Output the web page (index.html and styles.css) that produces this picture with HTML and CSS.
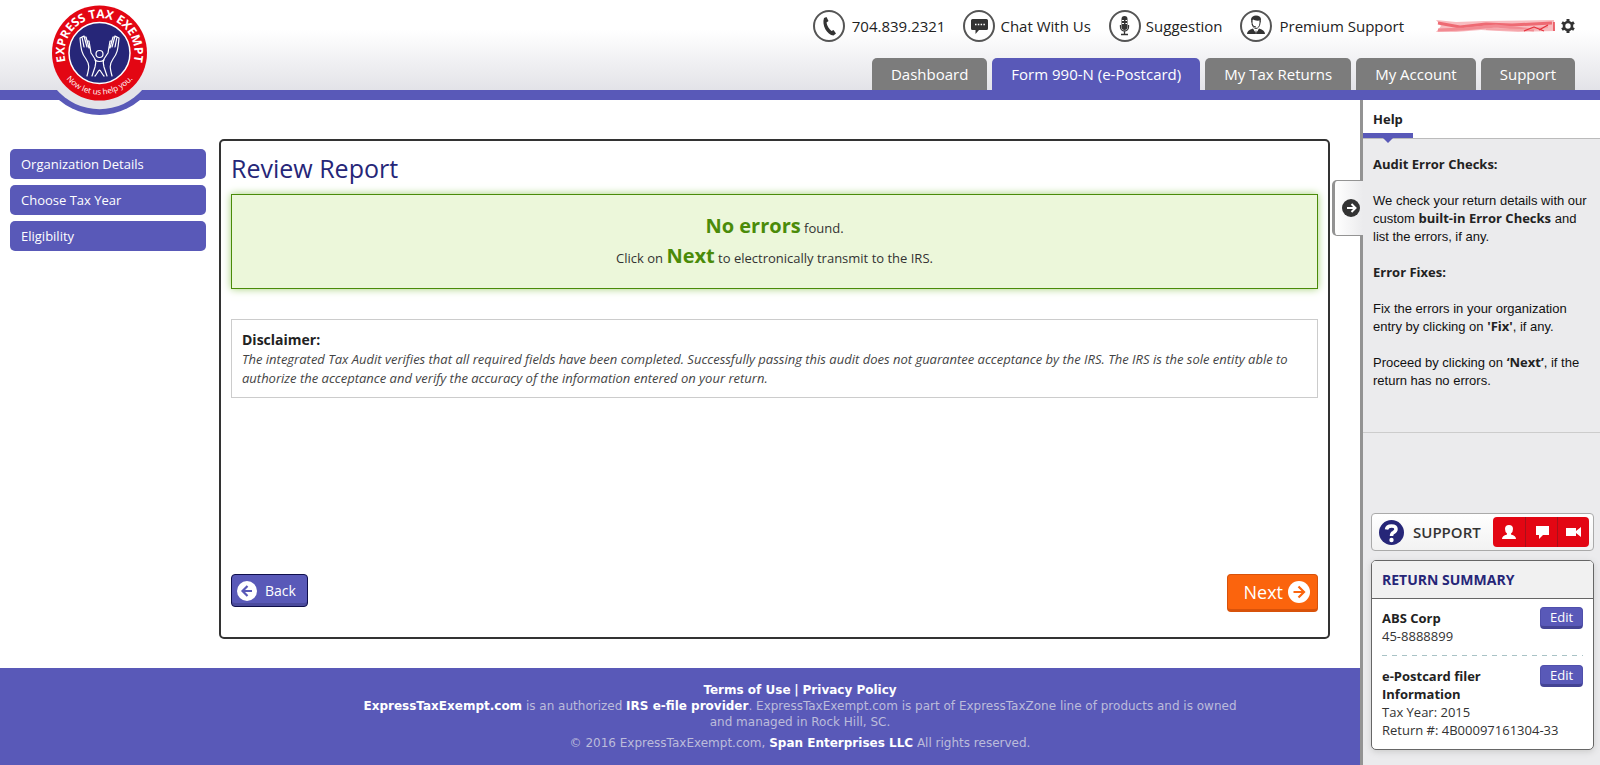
FILE: index.html
```html
<!DOCTYPE html>
<html lang="en">
<head>
    <meta charset="UTF-8">
    <meta name="viewport" content="width=device-width, initial-scale=1.0">
    <title>Review Report - ExpressTaxExempt</title>
    <link rel="stylesheet" href="styles.css">
</head>
<body>
    <header class="header">
        <a href="#" class="logo" aria-label="Express Tax Exempt">
            <svg width="130" height="116" viewBox="0 0 130 116">
                <defs>
                    <path id="arcTop" d="M37.3 75 A35 35 0 1 1 91.7 75"/>
                    <path id="arcBottom" d="M24 66 A43 43 0 0 0 105 66"/>
                </defs>
                <path d="M14.8 90 A62 62 0 0 0 114.2 90 Z" fill="#5959b8"/>
                <path d="M21 89 A57 57 0 0 0 108 89 Z" fill="#e3e3e8"/>
                <circle cx="64.5" cy="53" r="47.5" fill="#e30613"/>
                <circle cx="64.5" cy="53" r="30.5" fill="#262678" stroke="#fff" stroke-width="1.5"/>
                <text class="logo-name"><textPath href="#arcTop" startOffset="50%" text-anchor="middle">EXPRESS TAX EXEMPT</textPath></text>
                <text class="logo-tag"><textPath href="#arcBottom" startOffset="50%" text-anchor="middle">Now let us help you.</textPath></text>
                <g fill="none" stroke="#fff" stroke-width="1.2" stroke-linecap="round" stroke-linejoin="round">
                    <circle cx="64.5" cy="54" r="3.5"/>
                    <path d="M52 76 C54 68 55 65 51 59 C47 54 46 50 45 38 L47 37 L49 47 M47 37 L49 36 L52 47 M49 37 L51 37 L54 48 M52 41 L54 41 L56 53 C60 59 62 60 60 67 L57 76"/>
                    <path d="M77 76 C75 68 74 65 78 59 C82 54 83 50 84 38 L82 37 L80 47 M82 37 L80 36 L77 47 M80 37 L78 37 L75 48 M77 41 L75 41 L73 53 C69 59 67 60 69 67 L72 76"/>
                    <path d="M60 60 C62 62 67 62 69 60 M60 76 C62 74 63 71 64.5 70 C66 71 67 74 69 76"/>
                </g>
            </svg>
        </a>
        <div class="top-links">
            <a href="#">
                <svg class="round-icon" width="32" height="32" viewBox="0 0 32 32">
                    <circle cx="16" cy="16" r="15"/>
                    <path d="M11 8 L13.5 7 L15.5 11 L13.5 12.5 C14 16 16 19 18.5 21 L20.5 20 L23 23.5 L20.5 25.5 C14 25 8.5 15 11 8 Z"/>
                </svg>
                704.839.2321
            </a>
            <a href="#">
                <svg class="round-icon" width="32" height="32" viewBox="0 0 32 32">
                    <circle cx="16" cy="16" r="15"/>
                    <path d="M9.5 9 H23.5 Q25 9 25 10.5 V18.5 Q25 20 23.5 20 H16 L12.5 24 V20 H9.5 Q8 20 8 18.5 V10.5 Q8 9 9.5 9 Z"/>
                    <path d="M12 14.5 H22" stroke="#fff" stroke-width="1.5" stroke-dasharray="1.5 1.3"/>
                </svg>
                Chat With Us
            </a>
            <a href="#">
                <svg class="round-icon" width="32" height="32" viewBox="0 0 32 32">
                    <circle cx="16" cy="16" r="15"/>
                    <rect x="12.5" y="6" width="6" height="14" rx="3"/>
                    <path d="M13 10.5 H15 M16.5 10.5 H18 M13 13.5 H15 M16.5 13.5 H18" stroke="#fff"/>
                    <path d="M11.5 15 V17 A4 4 0 0 0 19.5 17 V15 M15.5 21 V24 M12 24.5 H19" fill="none" stroke="#333" stroke-width="1.3"/>
                </svg>
                Suggestion
            </a>
            <a href="#">
                <svg class="round-icon" width="32" height="32" viewBox="0 0 32 32">
                    <circle cx="16" cy="16" r="15"/>
                    <path d="M7 24 Q7 20 13 18.5 L16 23 L19 18.5 Q25 20 25 24 Z"/>
                    <path d="M12 11 V13 Q12.5 18 16 18.5 Q19.5 18 20 13 V11" fill="#fff" stroke="#333"/>
                    <path d="M11.5 13 L11 9 Q12 5.5 16 5.5 Q20.5 5.5 21 9 L20.5 13 L19.5 10.5 Q15 11 13 9.5 Z"/>
                    <path d="M12 14 Q13 17 16 17" fill="none" stroke="#333"/>
                    <path d="M13.5 18.5 L16 21 L18.5 18.5 L16 24 Z" fill="#fff"/>
                    <path d="M16 20 L17 23.5 H15 Z"/>
                </svg>
                Premium Support
            </a>
            <a href="#" class="account" aria-label="Account settings">
                <svg width="120" height="14" viewBox="0 0 120 14">
                    <path d="M0 1 L20 3 L48 2 L118 1 L119 12 L82 13 L45 11 L20 13 L0 13 L5 7 Z" fill="#f8bcc0"/>
                    <g fill="none" stroke-linejoin="round">
                        <path d="M2 4 L24 8 L50 5 L76 6 L116 4" stroke="#ee6a73" stroke-width="3"/>
                        <path d="M2 11 L28 10 L60 7 L98 11" stroke="#f28a92" stroke-width="3"/>
                        <path d="M50 10 L86 11 L112 8" stroke="#f5a3a8" stroke-width="2"/>
                        <path d="M88 12 L98 8 L108 12 M103 11 L112 6 M118 3 V12" stroke="#e5303c" stroke-width="1.3"/>
                    </g>
                </svg>
                <svg width="14" height="14" viewBox="0 0 14 14">
                    <circle cx="7" cy="7" r="4" fill="none" stroke="#333" stroke-width="2.6"/>
                    <path d="M7 0 V3 M7 11 V14 M1 3.5 L3.5 5 M10.5 9 L13 10.5 M1 10.5 L3.5 9 M10.5 5 L13 3.5" stroke="#333" stroke-width="3"/>
                </svg>
            </a>
        </div>
        <nav class="tabs">
            <a href="#">Dashboard</a>
            <a href="#" class="active">Form 990-N (e-Postcard)</a>
            <a href="#">My Tax Returns</a>
            <a href="#">My Account</a>
            <a href="#">Support</a>
        </nav>
    </header>

    <div class="page">
        <div class="content">
            <div class="columns">
                <nav class="side-menu">
                    <a href="#">Organization Details</a>
                    <a href="#">Choose Tax Year</a>
                    <a href="#">Eligibility</a>
                </nav>
                <main class="report">
                    <h1>Review Report</h1>
                    <div class="success">
                        <p><strong>No errors</strong> found.</p>
                        <p>Click on <strong>Next</strong> to electronically transmit to the IRS.</p>
                    </div>
                    <div class="disclaimer">
                        <h2>Disclaimer:</h2>
                        <p>The integrated Tax Audit verifies that all required fields have been completed. Successfully passing this audit does not guarantee acceptance by the IRS. The IRS is the sole entity able to authorize the acceptance and verify the accuracy of the information entered on your return.</p>
                    </div>
                    <div class="actions">
                        <button type="button" class="back">
                            <svg width="20" height="20" viewBox="0 0 20 20">
                                <circle cx="10" cy="10" r="10" fill="#fff"/>
                                <path d="M15 10 H6 M10.5 5 L5.5 10 L10.5 15" fill="none" stroke="#5959b8" stroke-width="2.2"/>
                            </svg>
                            Back
                        </button>
                        <button type="button" class="next">
                            Next
                            <svg width="22" height="22" viewBox="0 0 22 22">
                                <circle cx="11" cy="11" r="11" fill="#fff"/>
                                <path d="M5.5 11 H16 M10.5 5.5 L16 11 L10.5 16.5" fill="none" stroke="#fb640d" stroke-width="2.2"/>
                            </svg>
                        </button>
                    </div>
                </main>
            </div>
            <footer class="footer">
                <p><a href="#">Terms of Use</a> <b>|</b> <a href="#">Privacy Policy</a></p>
                <p><a href="#">ExpressTaxExempt.com</a> is an authorized <b>IRS e-file provider</b>. ExpressTaxExempt.com is part of ExpressTaxZone line of products and is owned and managed in Rock Hill, SC.</p>
                <p class="copyright">© 2016 ExpressTaxExempt.com, <b>Span Enterprises LLC</b> All rights reserved.</p>
            </footer>
        </div>

        <aside class="panel">
            <button type="button" class="collapse" aria-label="Collapse help">
                <svg width="18" height="18" viewBox="0 0 18 18">
                    <circle cx="9" cy="9" r="9" fill="#333"/>
                    <path d="M5 9 H13 M9.5 5 L13.5 9 L9.5 13" fill="none" stroke="#fff" stroke-width="2"/>
                </svg>
            </button>
            <div class="panel-head"><h2>Help</h2></div>
            <div class="help">
                <p><b>Audit Error Checks:</b></p>
                <p>We check your return details with our custom <b>built-in Error Checks</b> and list the errors, if any.</p>
                <p><b>Error Fixes:</b></p>
                <p>Fix the errors in your organization entry by clicking on <b>'Fix'</b>, if any.</p>
                <p>Proceed by clicking on <b>‘Next’</b>, if the return has no errors.</p>
            </div>
            <div class="support">
                <svg width="25" height="25" viewBox="0 0 25 25">
                    <circle cx="12.5" cy="12.5" r="12.5" fill="#262678"/>
                    <path d="M7.5 9.5 Q8 6 12.5 6 Q17 6 17 9 Q17 11 14.5 12.5 Q12.5 13.5 12.5 16" fill="none" stroke="#fff" stroke-width="3.5"/>
                    <circle cx="12.5" cy="20" r="2.2" fill="#fff"/>
                </svg>
                <span>SUPPORT</span>
                <div class="support-buttons">
                    <button type="button" aria-label="Contact">
                        <svg width="16" height="16" viewBox="0 0 16 16"><path d="M8 1 Q12 1 12 5 Q12 8 10 9.5 L10 10.5 Q15 11.5 15 15 H1 Q1 11.5 6 10.5 V9.5 Q4 8 4 5 Q4 1 8 1 Z"/></svg>
                    </button>
                    <button type="button" aria-label="Chat">
                        <svg width="16" height="16" viewBox="0 0 16 16"><path d="M2 2 H15 V11 H9 L5 15 V11 H2 Z"/></svg>
                    </button>
                    <button type="button" aria-label="Video">
                        <svg width="16" height="16" viewBox="0 0 16 16"><path d="M0 4 H10 V7 L15 3 V13 L10 9 V12 H0 Z"/></svg>
                    </button>
                </div>
            </div>
            <section class="summary">
                <h2>RETURN SUMMARY</h2>
                <div class="summary-row">
                    <button type="button">Edit</button>
                    <h3>ABS Corp</h3>
                    <p>45-8888899</p>
                </div>
                <div class="summary-row">
                    <button type="button">Edit</button>
                    <h3>e-Postcard filer Information</h3>
                    <p>Tax Year: 2015</p>
                    <p>Return #: 4B00097161304-33</p>
                </div>
            </section>
        </aside>
    </div>
</body>
</html>
```
FILE: styles.css
```css
* {
    box-sizing: border-box;
}

body {
    font-family: 'Open Sans', sans-serif;
    font-size: 13px;
    color: #333;
    background-color: #fff;
    margin: 0;
    min-height: 100vh;
    display: flex;
    flex-direction: column;
}

h1, h2, h3, p {
    margin: 0;
}

a {
    text-decoration: none;
}

button {
    font-family: inherit;
    cursor: pointer;
}

svg {
    display: block;
    flex: none;
}

/* header */
.header {
    position: relative;
    height: 100px;
    padding-right: 25px;
    background: linear-gradient(#fff 30px, #e3e3e8 90px);
    border-bottom: 10px solid #5959b8;
    display: flex;
    flex-direction: column;
    align-items: flex-end;
    justify-content: space-between;
}

.logo {
    position: absolute;
    left: 35px;
    top: 0;
    z-index: 2;
}

.logo-name {
    font-size: 12px;
    font-weight: bold;
    fill: #fff;
}

.logo-tag {
    font-size: 8px;
    fill: #fff;
}

.top-links {
    display: flex;
    gap: 18px;
    padding-top: 10px;
}

.top-links a {
    display: flex;
    align-items: center;
    gap: 5px;
    font-size: 15px;
    line-height: 30px;
    color: #222;
}

.top-links a:first-child,
.top-links a:nth-child(4) {
    gap: 7px;
}

.top-links .account {
    margin-left: 14px;
}

.round-icon {
    fill: #333;
}

.round-icon circle {
    fill: #fff;
    stroke: #555;
    stroke-width: 2;
}

.tabs {
    display: flex;
    gap: 5px;
}

.tabs a {
    padding: 0 19px;
    font-size: 15px;
    line-height: 32px;
    color: #fff;
    background-color: #7c7c7c;
    border-radius: 5px 5px 0 0;
}

.tabs .active {
    background-color: #5959b8;
}

/* layout */
.page {
    flex: 1;
    display: flex;
}

.content {
    flex: 1;
    min-width: 0;
    display: flex;
    flex-direction: column;
}

.columns {
    flex: 1;
    display: flex;
    align-items: stretch;
    gap: 13px;
    padding: 39px 30px 29px 10px;
}

.side-menu {
    flex: 0 0 196px;
    padding-top: 10px;
    display: flex;
    flex-direction: column;
    gap: 6px;
}

.side-menu a {
    padding-left: 11px;
    line-height: 30px;
    color: #fff;
    background-color: #5959b8;
    border-radius: 5px;
}

/* report */
.report {
    flex: 1;
    min-width: 0;
    padding: 10px 10px 25px;
    border: 2px solid #333;
    border-radius: 5px;
    display: flex;
    flex-direction: column;
}

.report h1 {
    font-size: 25px;
    font-weight: normal;
    line-height: 34px;
    color: #262678;
    margin-bottom: 9px;
}

.success {
    padding: 18px 10px 15px;
    text-align: center;
    line-height: 30px;
    background-color: #ecf7da;
    border: 1px solid #4a8b09;
    box-shadow: 0 0 8px #a5d178;
}

.success strong {
    font-size: 20px;
    line-height: 20px;
    color: #4a8b09;
}

.disclaimer {
    margin: 30px 0;
    padding: 10px 10px 9px;
    line-height: 19px;
    border: 1px solid #ccc;
}

.disclaimer h2 {
    font-size: 14px;
    line-height: 20px;
    color: #222;
}

.disclaimer p {
    font-style: italic;
    color: #444;
}

.actions {
    margin-top: auto;
    display: flex;
    justify-content: space-between;
    align-items: flex-start;
}

.actions button {
    display: flex;
    align-items: center;
    color: #fff;
    border-radius: 4px;
}

.actions .back {
    gap: 8px;
    height: 33px;
    padding: 0 11px 0 5px;
    font-size: 14px;
    background-color: #5959b8;
    border: 1px solid #0f0f4b;
    box-shadow: inset 0 -3px #4b4b9d;
}

.actions .next {
    gap: 5px;
    height: 38px;
    padding: 0 7px 0 16px;
    font-size: 18px;
    background-color: #fb640d;
    border: 1px solid #d8520a;
    border-bottom-width: 3px;
}

/* footer, its text is centred on the window and not on the content column */
.footer {
    padding: 14px 115px 14px 355px;
    font-family: 'DejaVu Sans', sans-serif;
    font-size: 12px;
    line-height: 16px;
    text-align: center;
    color: #bcbcdb;
    background-color: #5959b8;
}

.footer a,
.footer b {
    font-weight: bold;
    color: #fff;
}

.footer .copyright {
    margin-top: 5px;
}

/* help panel */
.panel {
    position: relative;
    flex: 0 0 240px;
    min-width: 0;
    padding-bottom: 15px;
    background-color: #ebebed;
    border-left: 3px solid #939393;
    display: flex;
    flex-direction: column;
}

.collapse {
    position: absolute;
    left: -31px;
    top: 80px;
    width: 31px;
    height: 56px;
    padding: 0 0 0 7px;
    background: linear-gradient(to right, #fff, #ebebed);
    border: 1px solid #939393;
    border-left-width: 3px;
    border-right: none;
    border-radius: 5px 0 0 5px;
}

.panel-head {
    background-color: #fff;
    border-bottom: 1px solid #bbb;
}

.panel-head h2 {
    position: relative;
    width: 50px;
    padding: 5px 0 0 10px;
    font-size: 13px;
    line-height: 28px;
    color: #222;
    border-bottom: 5px solid #5959b8;
}

.panel-head h2::after {
    content: "";
    position: absolute;
    left: 20px;
    top: 38px;
    border: 5px solid transparent;
    border-top-color: #5959b8;
    border-bottom: none;
}

.help {
    padding: 17px 8px 42px 10px;
    font-family: 'Liberation Sans', sans-serif;
    line-height: 18px;
    color: #111;
    border-bottom: 1px solid #ccc;
}

.help p + p {
    margin-top: 18px;
}

.help b {
    font-family: 'Open Sans', sans-serif;
    line-height: 13px;
    color: #222;
}

.support {
    margin: auto 6px 0 8px;
    padding: 3px 4px 3px 7px;
    display: flex;
    align-items: center;
    gap: 9px;
    background: linear-gradient(#fff, #f2f2f2);
    border: 1px solid #aaa;
    border-radius: 4px;
}

.support span {
    flex: 1;
    font-size: 15px;
    font-weight: 600;
    color: #333;
}

.support-buttons {
    display: flex;
    border-radius: 4px;
    overflow: hidden;
}

.support-buttons button {
    width: 32px;
    height: 30px;
    padding: 0 8px;
    fill: #fff;
    background-color: #e30613;
    border: none;
}

.support-buttons button + button {
    border-left: 1px solid #a8101a;
}

.summary {
    margin: 9px 6px 0 8px;
    background-color: #fff;
    border: 1px solid #666;
    border-radius: 5px;
    box-shadow: 0 2px 6px #ccc;
}

.summary h2 {
    padding-left: 10px;
    font-size: 14px;
    font-weight: bold;
    line-height: 37px;
    color: #262678;
    background-color: #f1f1f1;
    border-bottom: 1px solid #666;
    border-radius: 4px 4px 0 0;
}

.summary-row {
    margin: 0 10px;
    padding: 10px 0;
    line-height: 18px;
}

.summary-row + .summary-row {
    padding-top: 12px;
    background: repeating-linear-gradient(to right, #a9c3c6 0, #a9c3c6 5px, transparent 5px, transparent 10px) top / 100% 1px no-repeat;
}

.summary-row h3 {
    font-size: 13px;
    color: #222;
}

.summary-row button {
    float: right;
    width: 43px;
    height: 22px;
    margin: -2px 0 0 20px;
    padding: 1px 0 0;
    font-size: 13px;
    line-height: 17px;
    color: #fff;
    background-color: #5959b8;
    border: 1px solid #4f4fab;
    border-bottom: 3px solid #444494;
    border-radius: 4px;
}
```
